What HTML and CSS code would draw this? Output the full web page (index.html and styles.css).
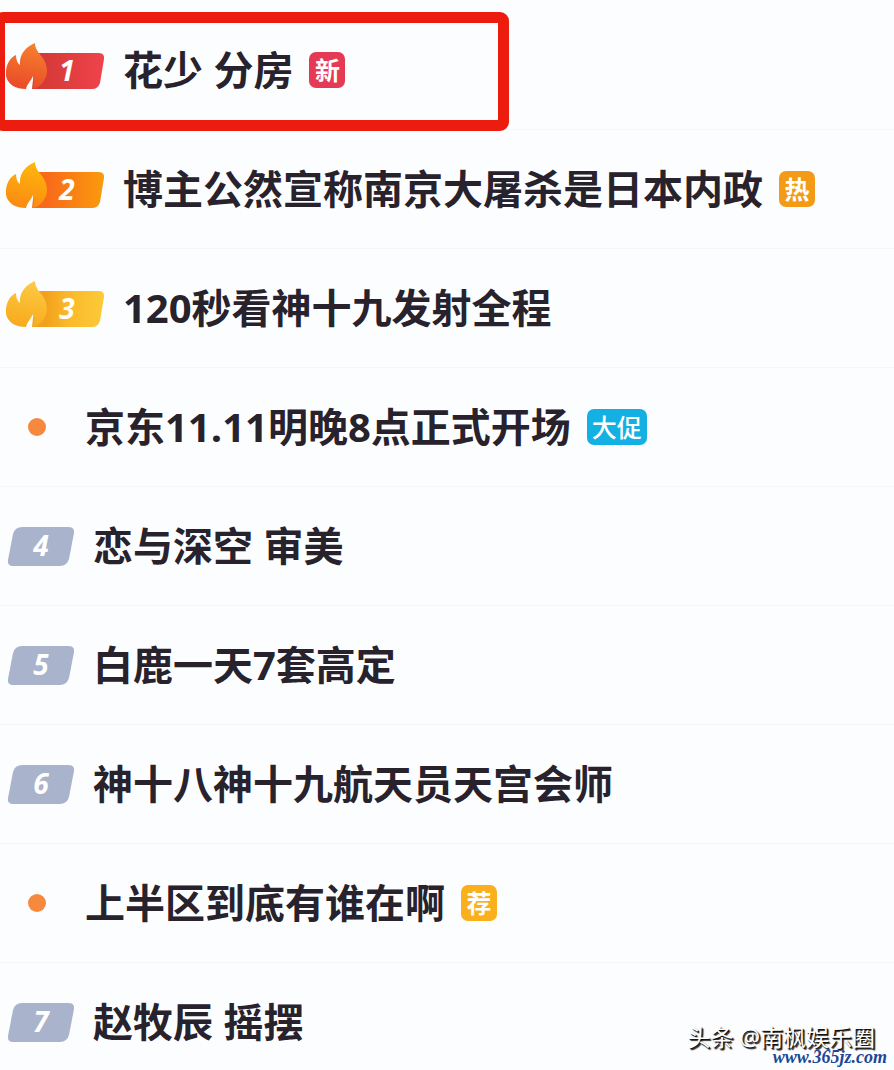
FILE: index.html
```html
<!DOCTYPE html>
<html lang="zh-CN">
  <head>
    <meta charset="UTF-8" />
    <meta name="viewport" content="width=device-width, initial-scale=1.0" />
    <title>热搜榜</title>
    <link rel="stylesheet" href="styles.css">
  </head>
  <body>
    <!-- Shared badge shapes -->
    <svg class="defs" width="0" height="0" aria-hidden="true">
      <defs>
        <linearGradient id="barRed" x1="0" x2="1"><stop offset="0.2" stop-color="#d63a38" /><stop offset="1" stop-color="#f0434b" /></linearGradient>
        <linearGradient id="barOrange" x1="0" x2="1"><stop offset="0.2" stop-color="#f9691a" /><stop offset="1" stop-color="#fa9b0c" /></linearGradient>
        <linearGradient id="barYellow" x1="0" x2="1"><stop offset="0.2" stop-color="#f2a11c" /><stop offset="0.5" stop-color="#fbb928" /><stop offset="1" stop-color="#fcca3a" /></linearGradient>
        <linearGradient id="flameRed" x1="0.6" y1="0" x2="0.4" y2="1"><stop offset="0" stop-color="#f5812f" /><stop offset="1" stop-color="#ea4a28" /></linearGradient>
        <linearGradient id="flameOrange" x1="0.6" y1="0" x2="0.4" y2="1"><stop offset="0" stop-color="#ffb70c" /><stop offset="1" stop-color="#fa8a12" /></linearGradient>
        <linearGradient id="flameYellow" x1="0.6" y1="0" x2="0.4" y2="1"><stop offset="0" stop-color="#fdca45" /><stop offset="1" stop-color="#f7aa1c" /></linearGradient>
        <path id="bar" d="M30 10H92Q99 10 98 16L94 40Q92 46 86 46H26Z" />
        <path id="flame" d="M29 0C29 6 33 10 36 14C42 22 43 32 37 39C34 43 31 45 27 46C28 42 28 37 27 33C25 38 21 41 20 46C10 46 2 42 0 33C-1 24 3 15 10 12C10 16 11 20 14 22C13 11 20 4 29 0Z" />
        <path id="plate" d="M14 0H60Q67 0 66 6L61 32Q59 39 52 39H6Q-1 39 0 33L5 7Q7 0 14 0Z" />
      </defs>
    </svg>

    <main class="screen">
      <ol class="hot-list">
        <li class="hot-item marked">
          <svg class="rank-top" viewBox="0 -1 98 56">
            <use href="#bar" fill="url(#barRed)" />
            <use href="#flame" fill="url(#flameRed)" />
            <text x="61" y="38">1</text>
          </svg>
          <a class="title" href="#">花少 分房</a>
          <span class="tag tag-new">新</span>
        </li>
        <li class="hot-item">
          <svg class="rank-top" viewBox="0 -1 98 56">
            <use href="#bar" fill="url(#barOrange)" />
            <use href="#flame" fill="url(#flameOrange)" />
            <text x="61" y="38">2</text>
          </svg>
          <a class="title" href="#">博主公然宣称南京大屠杀是日本内政</a>
          <span class="tag tag-hot">热</span>
        </li>
        <li class="hot-item">
          <svg class="rank-top" viewBox="0 -1 98 56">
            <use href="#bar" fill="url(#barYellow)" />
            <use href="#flame" fill="url(#flameYellow)" />
            <text x="61" y="38">3</text>
          </svg>
          <a class="title" href="#">120秒看神十九发射全程</a>
        </li>
        <li class="hot-item">
          <span class="dot"></span>
          <a class="title" href="#">京东11.11明晚8点正式开场</a>
          <span class="tag tag-sale">大促</span>
        </li>
        <li class="hot-item">
          <svg class="rank" viewBox="0 0 66 39"><use href="#plate" /><text x="33" y="29">4</text></svg>
          <a class="title" href="#">恋与深空 审美</a>
        </li>
        <li class="hot-item">
          <svg class="rank" viewBox="0 0 66 39"><use href="#plate" /><text x="33" y="29">5</text></svg>
          <a class="title" href="#">白鹿一天7套高定</a>
        </li>
        <li class="hot-item">
          <svg class="rank" viewBox="0 0 66 39"><use href="#plate" /><text x="33" y="29">6</text></svg>
          <a class="title" href="#">神十八神十九航天员天宫会师</a>
        </li>
        <li class="hot-item">
          <span class="dot"></span>
          <a class="title" href="#">上半区到底有谁在啊</a>
          <span class="tag tag-rec">荐</span>
        </li>
        <li class="hot-item">
          <svg class="rank" viewBox="0 0 66 39"><use href="#plate" /><text x="33" y="29">7</text></svg>
          <a class="title" href="#">赵牧辰 摇摆</a>
        </li>
      </ol>

      <div class="watermark">
        <span class="author">头条 @南枫娱乐圈</span>
        <span class="site">www.365jz.com</span>
      </div>
    </main>
  </body>
</html>
```
FILE: styles.css
```css
body {
  margin: 0;
  background-color: #fcfdff;
  color: #28222c;
  font-family: "Open Sans", "Noto Sans CJK SC", sans-serif;
}

.defs {
  position: absolute;
}

.screen {
  position: relative;
  height: 100vh;
  overflow: hidden;
}

.hot-list {
  margin: 0;
  padding: 11px 0 0;
  list-style: none;
}

.hot-item {
  position: relative;
  display: flex;
  align-items: center;
  box-sizing: border-box;
  height: 119px;
  padding-left: 8px;
  border-bottom: 1px solid #f4f6f9;
}

/* red frame drawn around the first topic */
.marked::after {
  content: "";
  position: absolute;
  top: 1px;
  left: -6px;
  box-sizing: border-box;
  width: 515px;
  height: 119px;
  border: 11px solid #ec1c0e;
  border-radius: 9px;
  pointer-events: none;
}

.title {
  color: inherit;
  font-size: 40px;
  font-weight: bold;
  line-height: 56px;
  text-decoration: none;
  white-space: nowrap;
}

.rank-top {
  flex: none;
  width: 98px;
  height: 56px;
  margin-left: -2px;
  margin-right: 19px;
}

.rank {
  flex: none;
  width: 66px;
  height: 39px;
  margin-right: 19px;
  fill: #a9b3cb;
}

.rank-top text,
.rank text {
  fill: #fff;
  font-size: 28px;
  font-style: italic;
  font-weight: bold;
  text-anchor: middle;
}

.dot {
  flex: none;
  width: 18px;
  height: 18px;
  margin: 0 39px 0 20px;
  border-radius: 50%;
  background-color: #f6893e;
}

.tag {
  box-sizing: border-box;
  min-width: 36px;
  margin-left: 16px;
  padding: 0 5px;
  border-radius: 7px;
  color: #fff;
  font-size: 25px;
  font-weight: bold;
  line-height: 36px;
  text-align: center;
}

.tag-new {
  background-color: #e53a55;
}

.tag-hot {
  background-color: #f39a17;
}

.tag-sale {
  font-weight: 500;
  background-color: #12b0e3;
}

.tag-rec {
  background-color: #f9b01c;
}

.watermark {
  position: absolute;
  right: 7px;
  bottom: 5px;
  display: flex;
  flex-direction: column;
  align-items: flex-end;
}

.author {
  margin-right: 12px;
  color: #fff;
  font-size: 23px;
  line-height: 24px;
  text-shadow: 1px 1px 1px #000, 2px 2px 1px #333;
}

.site {
  color: #1d4795;
  font-family: "Liberation Serif", serif;
  font-size: 18px;
  font-style: italic;
  font-weight: bold;
  line-height: 16px;
}
```
